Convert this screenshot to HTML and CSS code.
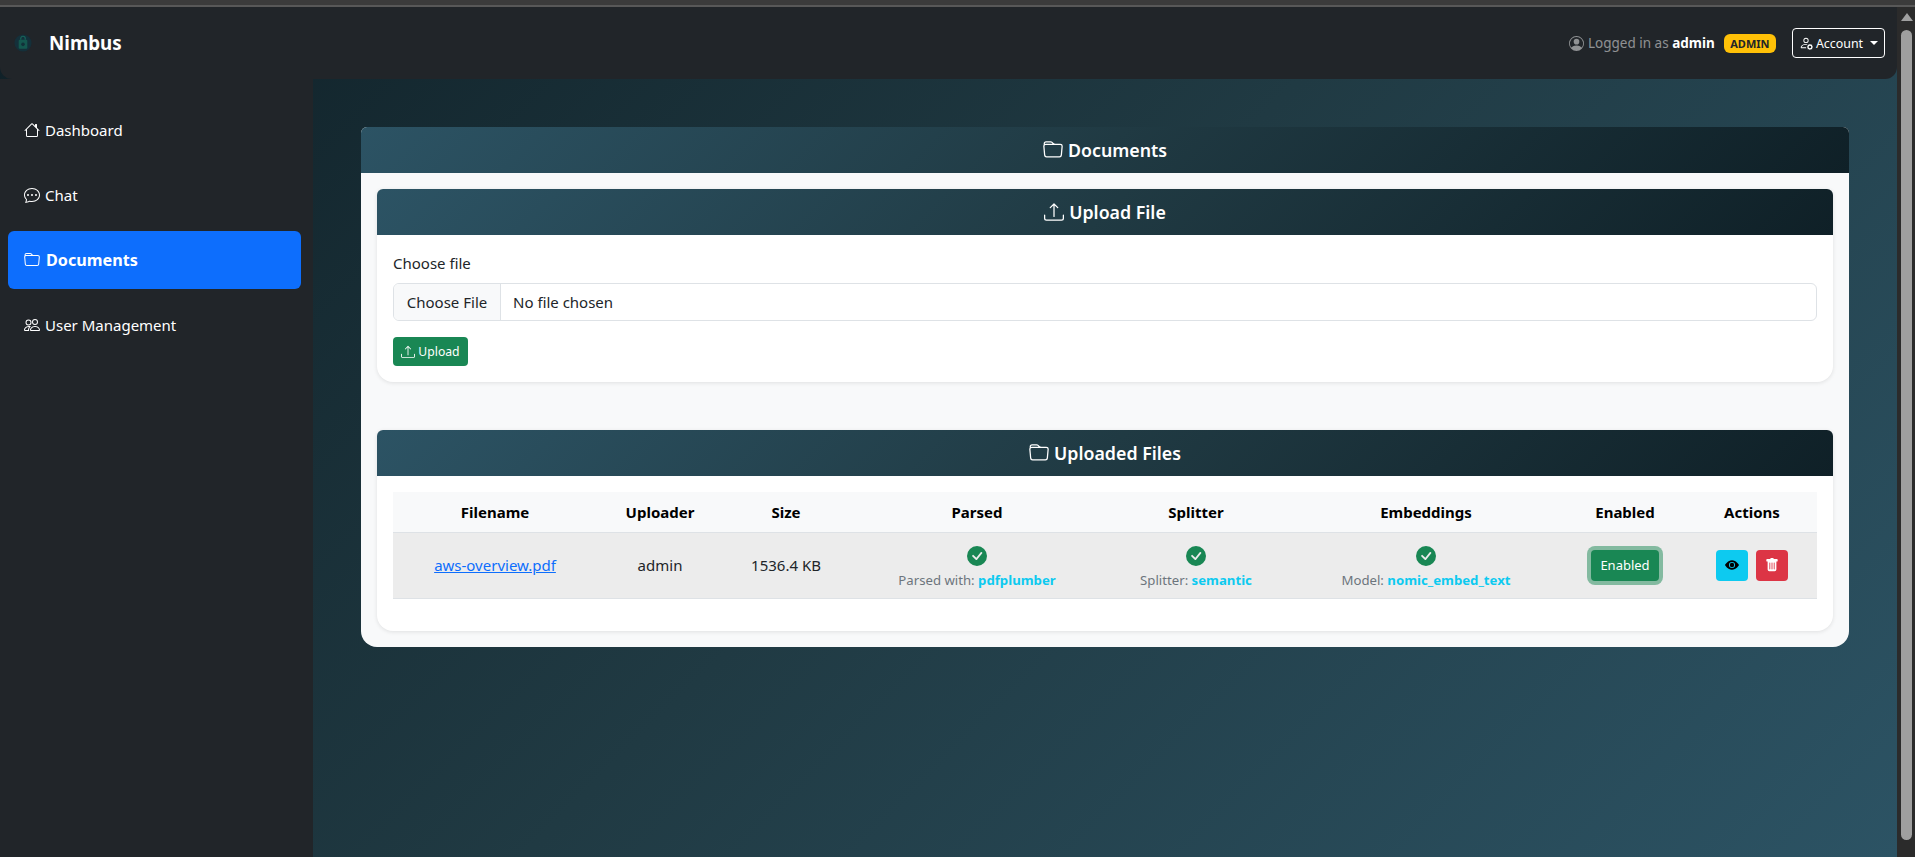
FILE: index.html
```html
<!DOCTYPE html>
<html lang="en">
<head>
<meta charset="utf-8">
<title>Nimbus - Documents</title>
<link rel="stylesheet" href="styles.css">
</head>
<body>
<svg class="sprite" aria-hidden="true">
  <symbol id="i-house" viewBox="0 0 16 16"><path d="M8.707 1.5a1 1 0 0 0-1.414 0L.646 8.146a.5.5 0 0 0 .708.708L2 8.207V13.5A1.5 1.5 0 0 0 3.5 15h9a1.5 1.5 0 0 0 1.5-1.5V8.207l.646.647a.5.5 0 0 0 .708-.708L13 5.793V2.5a.5.5 0 0 0-.5-.5h-1a.5.5 0 0 0-.5.5v1.293zM13 7.207V13.5a.5.5 0 0 1-.5.5h-9a.5.5 0 0 1-.5-.5V7.207l5-5z"/></symbol>
  <symbol id="i-chat" viewBox="0 0 16 16"><path d="M5 8a1 1 0 1 1-2 0 1 1 0 0 1 2 0m4 0a1 1 0 1 1-2 0 1 1 0 0 1 2 0m3 1a1 1 0 1 0 0-2 1 1 0 0 0 0 2"/><path d="m2.165 15.803.02-.004c1.83-.363 2.948-.842 3.468-1.105A9 9 0 0 0 8 15c4.418 0 8-3.134 8-7s-3.582-7-8-7-8 3.134-8 7c0 1.76.743 3.37 1.97 4.6a10.4 10.4 0 0 1-.524 2.318l-.003.011a11 11 0 0 1-.244.637c-.079.186.074.394.273.362a22 22 0 0 0 .693-.125m.8-3.108a1 1 0 0 0-.287-.801C1.618 10.83 1 9.468 1 8c0-3.192 3.004-6 7-6s7 2.808 7 6-3.004 6-7 6a8 8 0 0 1-2.088-.272 1 1 0 0 0-.711.074c-.387.196-1.24.57-2.634.893a11 11 0 0 0 .398-2"/></symbol>
  <symbol id="i-folder" viewBox="0 0 16 16"><path d="M.54 3.87.5 3a2 2 0 0 1 2-2h3.672a2 2 0 0 1 1.414.586l.828.828A2 2 0 0 0 9.828 3h3.982a2 2 0 0 1 1.992 2.181l-.637 7A2 2 0 0 1 13.174 14H2.826a2 2 0 0 1-1.991-1.819l-.637-7a2 2 0 0 1 .342-1.31zM2.19 4a1 1 0 0 0-.996 1.09l.637 7a1 1 0 0 0 .995.91h10.348a1 1 0 0 0 .995-.91l.637-7A1 1 0 0 0 13.81 4zm4.69-1.707A1 1 0 0 0 6.172 2H2.5a1 1 0 0 0-1 .981l.006.139q.323-.119.684-.12h5.396z"/></symbol>
  <symbol id="i-people" viewBox="0 0 16 16"><path d="M15 14s1 0 1-1-1-4-5-4-5 3-5 4 1 1 1 1zm-7.978-1L7 12.996c.001-.264.167-1.03.76-1.72C8.312 10.629 9.282 10 11 10c1.717 0 2.687.63 3.24 1.276.593.69.758 1.457.76 1.72l-.008.002-.014.002zM11 7a2 2 0 1 0 0-4 2 2 0 0 0 0 4m3-2a3 3 0 1 1-6 0 3 3 0 0 1 6 0M6.936 9.28a6 6 0 0 0-1.23-.247A7 7 0 0 0 5 9c-4 0-5 3-5 4q0 1 1 1h4.216A2.24 2.24 0 0 1 5 13c0-1.01.377-2.042 1.09-2.904.243-.294.526-.569.846-.816M4.92 10A5.5 5.5 0 0 0 4 13H1c0-.26.164-1.03.76-1.724.545-.636 1.492-1.256 3.16-1.275ZM1.5 5.5a3 3 0 1 1 6 0 3 3 0 0 1-6 0m3-2a2 2 0 1 0 0 4 2 2 0 0 0 0-4"/></symbol>
  <symbol id="i-upload" viewBox="0 0 16 16"><path d="M.5 9.9a.5.5 0 0 1 .5.5v2.5a1 1 0 0 0 1 1h12a1 1 0 0 0 1-1v-2.5a.5.5 0 0 1 1 0v2.5a2 2 0 0 1-2 2H2a2 2 0 0 1-2-2v-2.5a.5.5 0 0 1 .5-.5"/><path d="M7.646 1.146a.5.5 0 0 1 .708 0l3 3a.5.5 0 0 1-.708.708L8.5 2.707V11.5a.5.5 0 0 1-1 0V2.707L5.354 4.854a.5.5 0 1 1-.708-.708z"/></symbol>
  <symbol id="i-person-circle" viewBox="0 0 16 16"><path d="M11 6a3 3 0 1 1-6 0 3 3 0 0 1 6 0"/><path fill-rule="evenodd" d="M0 8a8 8 0 1 1 16 0A8 8 0 0 1 0 8m8-7a7 7 0 0 0-5.468 11.37C3.242 11.226 4.805 10 8 10s4.757 1.225 5.468 2.37A7 7 0 0 0 8 1"/></symbol>
  <symbol id="i-person-gear" viewBox="0 0 16 16"><path d="M11 5a3 3 0 1 1-6 0 3 3 0 0 1 6 0M8 7a2 2 0 1 0 0-4 2 2 0 0 0 0 4m.256 7a4.5 4.5 0 0 1-.229-1.004H3c.001-.246.154-.986.832-1.664C4.484 10.68 5.711 10 8 10q.39 0 .74.025c.226-.341.496-.65.804-.918Q8.844 9.002 8 9c-5 0-6 3-6 4s1 1 1 1z"/><path d="M11.886 9.46c.18-.613 1.048-.613 1.229 0l.043.148a.64.64 0 0 0 .921.382l.136-.074c.561-.306 1.175.308.87.869l-.075.136a.64.64 0 0 0 .382.92l.149.045c.612.18.612 1.048 0 1.229l-.15.043a.64.64 0 0 0-.38.921l.074.136c.305.561-.309 1.175-.87.87l-.136-.075a.64.64 0 0 0-.92.382l-.045.149c-.18.612-1.048.612-1.229 0l-.043-.15a.64.64 0 0 0-.921-.38l-.136.074c-.561.305-1.175-.309-.87-.87l.075-.136a.64.64 0 0 0-.382-.92l-.148-.045c-.613-.18-.613-1.048 0-1.229l.148-.043a.64.64 0 0 0 .382-.921l-.074-.136c-.306-.561.308-1.175.869-.87l.136.075a.64.64 0 0 0 .92-.382zM14 12.5a1.5 1.5 0 1 0-3 0 1.5 1.5 0 0 0 3 0"/></symbol>
  <symbol id="i-check" viewBox="0 0 16 16"><path d="M16 8A8 8 0 1 1 0 8a8 8 0 0 1 16 0m-3.97-3.03a.75.75 0 0 0-1.08.022L7.477 9.417 5.384 7.323a.75.75 0 0 0-1.06 1.06L6.97 11.03a.75.75 0 0 0 1.079-.02l3.992-4.99a.75.75 0 0 0-.01-1.05z"/></symbol>
  <symbol id="i-eye" viewBox="0 0 16 16"><path d="M10.5 8a2.5 2.5 0 1 1-5 0 2.5 2.5 0 0 1 5 0"/><path d="M0 8s3-5.5 8-5.5S16 8 16 8s-3 5.5-8 5.5S0 8 0 8m8 3.5a3.5 3.5 0 1 0 0-7 3.5 3.5 0 0 0 0 7"/></symbol>
  <symbol id="i-trash" viewBox="0 0 16 16"><path d="M2.5 1a1 1 0 0 0-1 1v1a1 1 0 0 0 1 1H3v9a2 2 0 0 0 2 2h6a2 2 0 0 0 2-2V4h.5a1 1 0 0 0 1-1V2a1 1 0 0 0-1-1H10a1 1 0 0 0-1-1H7a1 1 0 0 0-1 1zm3 4a.5.5 0 0 1 .5.5v7a.5.5 0 0 1-1 0v-7a.5.5 0 0 1 .5-.5M8 5a.5.5 0 0 1 .5.5v7a.5.5 0 0 1-1 0v-7A.5.5 0 0 1 8 5m3 .5v7a.5.5 0 0 1-1 0v-7a.5.5 0 0 1 1 0"/></symbol>
</svg>

<div class="browser-strip"></div>
<div class="window">
  <div class="app">
    <header class="navbar">
      <a class="brand" href="#">
        <svg class="logo" viewBox="0 0 20 20" aria-hidden="true">
          <circle cx="10" cy="10" r="9.5" fill="#14303a"/>
          <path d="M7.5 6.5V5a2.5 2.5 0 0 1 5 0v1.5" fill="none" stroke="#17655a" stroke-width="1.3"/>
          <rect x="5.2" y="6.5" width="9.6" height="10" rx="1.2" fill="#14584f"/>
          <circle cx="10" cy="11.5" r="2" fill="#123039"/>
        </svg>
        <span>Nimbus</span>
      </a>
      <div class="nav-right">
        <span class="logged">
          <svg class="icon" aria-hidden="true"><use href="#i-person-circle"/></svg>
          <span>Logged in as <strong>admin</strong></span>
        </span>
        <span class="badge">ADMIN</span>
        <button class="account" type="button">
          <svg class="icon" aria-hidden="true"><use href="#i-person-gear"/></svg>
          <span class="account-label">Account</span>
          <span class="caret"></span>
        </button>
      </div>
    </header>
    <div class="body-row">
      <nav class="sidebar">
        <a class="nav-link" href="#"><svg class="icon" aria-hidden="true"><use href="#i-house"/></svg>Dashboard</a>
        <a class="nav-link" href="#"><svg class="icon" aria-hidden="true"><use href="#i-chat"/></svg>Chat</a>
        <a class="nav-link active" href="#"><svg class="icon" aria-hidden="true"><use href="#i-folder"/></svg>Documents</a>
        <a class="nav-link" href="#"><svg class="icon" aria-hidden="true"><use href="#i-people"/></svg>User Management</a>
      </nav>
      <main class="main">
        <section class="card outer">
          <h1 class="card-head"><svg class="icon" aria-hidden="true"><use href="#i-folder"/></svg>Documents</h1>
          <div class="outer-body">
            <section class="card inner upload-card">
              <h2 class="card-head"><svg class="icon" aria-hidden="true"><use href="#i-upload"/></svg>Upload File</h2>
              <form class="card-body">
                <label class="form-label" for="file">Choose file</label>
                <input class="file-input" id="file" type="file">
                <button class="upload-btn" type="button"><svg class="icon" aria-hidden="true"><use href="#i-upload"/></svg>Upload</button>
              </form>
            </section>
            <section class="card inner files-card">
              <h2 class="card-head"><svg class="icon" aria-hidden="true"><use href="#i-folder"/></svg>Uploaded Files</h2>
              <div class="card-body table-body">
                <table class="files">
                  <thead>
                    <tr>
                      <th class="c-file">Filename</th>
                      <th class="c-user">Uploader</th>
                      <th class="c-size">Size</th>
                      <th class="c-parsed">Parsed</th>
                      <th class="c-split">Splitter</th>
                      <th class="c-embed">Embeddings</th>
                      <th class="c-enabled">Enabled</th>
                      <th class="c-actions">Actions</th>
                    </tr>
                  </thead>
                  <tbody>
                    <tr>
                      <td><a class="file-link" href="#">aws-overview.pdf</a></td>
                      <td>admin</td>
                      <td>1536.4 KB</td>
                      <td class="status-cell"><svg class="status" aria-hidden="true"><use href="#i-check"/></svg><div class="meta">Parsed with: <b>pdfplumber</b></div></td>
                      <td class="status-cell"><svg class="status" aria-hidden="true"><use href="#i-check"/></svg><div class="meta">Splitter: <b>semantic</b></div></td>
                      <td class="status-cell"><svg class="status" aria-hidden="true"><use href="#i-check"/></svg><div class="meta">Model: <b>nomic_embed_text</b></div></td>
                      <td><button class="enabled-btn" type="button">Enabled</button></td>
                      <td>
                        <div class="actions">
                          <button class="act view" type="button" aria-label="View"><svg class="icon" aria-hidden="true"><use href="#i-eye"/></svg></button>
                          <button class="act del" type="button" aria-label="Delete"><svg class="icon" aria-hidden="true"><use href="#i-trash"/></svg></button>
                        </div>
                      </td>
                    </tr>
                  </tbody>
                </table>
              </div>
            </section>
          </div>
        </section>
      </main>
    </div>
  </div>
  <div class="scrollbar" aria-hidden="true">
    <div class="arrow"></div>
    <div class="thumb"></div>
  </div>
</div>
</body>
</html>
```

FILE: styles.css
```css
* { box-sizing: border-box; }
html, body { margin: 0; height: 100%; overflow: hidden; }
body {
  display: flex;
  flex-direction: column;
  font-family: "Noto Sans", "Open Sans", sans-serif;
  font-size: 15px;
  line-height: 24px;
  color: #212529;
  background: #2b2b2b;
}
.sprite { display: none; }
.icon { width: 16px; height: 16px; fill: currentColor; flex: none; display: inline-block; }

.browser-strip {
  height: 7px;
  flex: none;
  background: #3b3b3b;
  border-bottom: 2px solid #585858;
}
.window { flex: 1; display: flex; min-height: 0; }
.app {
  flex: 1;
  display: flex;
  flex-direction: column;
  min-width: 0;
  background: linear-gradient(135deg, #0f2027, #203a43 50%, #2c5364);
}

.scrollbar {
  width: 18px;
  flex: none;
  background: #2b2b2b;
  padding: 6px 3px 17px 4px;
  display: flex;
  flex-direction: column;
  align-items: center;
}
.arrow {
  width: 0; height: 0;
  border-left: 6px solid transparent;
  border-right: 6px solid transparent;
  border-bottom: 8px solid #a0a0a0;
  margin-bottom: 9px;
}
.thumb { width: 11px; flex: 1; background: #9f9f9f; border-radius: 6px; }

.navbar {
  height: 72px;
  flex: none;
  display: flex;
  align-items: center;
  justify-content: space-between;
  padding: 0 12px 0 14px;
  background: #212529;
  border-radius: 0 0 12px 12px;
}
.brand {
  display: flex;
  align-items: center;
  gap: 17px;
  color: #fff;
  text-decoration: none;
  font-size: 18.8px;
  font-weight: 700;
}
.logo { width: 18px; height: 18px; }
.nav-right { display: flex; align-items: center; font-size: 13.5px; }
.logged { display: flex; align-items: center; gap: 4px; color: rgba(255, 255, 255, 0.5); }
.logged .icon { width: 15px; height: 15px; }
.logged strong { color: #fff; font-weight: 700; }
.badge {
  margin-left: 9px;
  padding: 0 6.5px;
  height: 19px;
  line-height: 19px;
  background: #ffc107;
  color: #212529;
  border-radius: 6px;
  font-size: 11px;
  font-weight: 700;
}
.account {
  margin-left: 16px;
  height: 30px;
  width: 93px;
  display: flex;
  align-items: center;
  justify-content: center;
  gap: 3px;
  background: transparent;
  border: 1px solid #fff;
  border-radius: 4px;
  color: #fff;
  font: inherit;
  font-size: 12.4px;
  padding: 0;
}
.account-label { padding-top: 1px; }
.account .icon { width: 14px; height: 14px; }
.caret {
  margin-left: 4px;
  border-top: 4px solid #fff;
  border-left: 4px solid transparent;
  border-right: 4px solid transparent;
}

.body-row { flex: 1; display: flex; min-height: 0; }
.sidebar {
  width: 313px;
  flex: none;
  background: #212529;
  padding: 22px 12px 0 8px;
  display: flex;
  flex-direction: column;
  gap: 7px;
}
.nav-link {
  height: 58px;
  display: flex;
  align-items: center;
  gap: 5px;
  padding-left: 16px;
  border-radius: 6px;
  color: #fff;
  text-decoration: none;
}
.nav-link.active { background: #0d6efd; font-weight: 700; font-size: 16.2px; gap: 6px; }

.main { flex: 1; min-width: 0; padding: 48px; }
.card { background: #fff; }
.outer {
  background: #f8f9fa;
  border-radius: 6px 6px 16px 16px;
  height: 520px;
}
.card-head {
  margin: 0;
  height: 46px;
  display: flex;
  align-items: center;
  justify-content: center;
  gap: 5px;
  color: #fff;
  font-size: 17.8px;
  font-weight: 600;
  background: linear-gradient(135deg, #2c5364, #203a43 50%, #0f2027);
  border-radius: 6px 6px 0 0;
}
.card-head .icon { width: 20px; height: 20px; }
.outer-body { padding: 16px; display: flex; flex-direction: column; gap: 48px; }
.inner {
  border-radius: 6px 6px 16px 16px;
  box-shadow: 0 1px 4px rgba(0, 0, 0, 0.1);
}
.card-body { padding: 16px; }

.form-label { display: block; height: 24px; margin-bottom: 8px; color: #212529; font-size: 15px; }
.file-input {
  display: block;
  width: 100%;
  height: 38px;
  padding: 0;
  border: 1px solid #dee2e6;
  border-radius: 6px;
  background: #fff;
  color: #212529;
  font: inherit;
  line-height: 36px;
}
.file-input::file-selector-button {
  height: 36px;
  width: 107px;
  margin: 0 12px 0 0;
  padding: 0;
  border: 0;
  border-right: 1px solid #dee2e6;
  background: #f8f9fa;
  color: #212529;
  font: inherit;
}
.upload-btn {
  margin-top: 16px;
  display: flex;
  align-items: center;
  justify-content: center;
  gap: 3px;
  width: 75px;
  height: 29px;
  padding: 1px 0 0;
  border: 0;
  border-radius: 4px;
  background: #198754;
  color: #fff;
  font: inherit;
  font-size: 12.2px;
}
.upload-btn .icon { width: 14px; height: 14px; }

.table-body { padding-bottom: 32px; }
.files {
  width: 100%;
  table-layout: fixed;
  border-collapse: collapse;
  text-align: center;
}
.files th {
  height: 40px;
  padding: 0;
  background: #f8f9fa;
  color: #000;
  font-weight: 700;
  font-size: 15px;
  border-bottom: 1px solid #dee2e6;
}
.files th.c-actions { padding-left: 2px; }
.files td {
  height: 66px;
  padding: 0;
  background: #ececec;
  border-bottom: 1px solid #dee2e6;
  vertical-align: middle;
}
.files td.status-cell { vertical-align: top; padding-top: 13px; }
.c-file { width: 204px; }
.c-user { width: 126px; }
.c-size { width: 126px; }
.c-parsed { width: 256px; }
.c-split { width: 182px; }
.c-embed { width: 278px; }
.c-enabled { width: 120px; }
.file-link { color: #0d6efd; }
.status { width: 20px; height: 20px; fill: #198754; display: block; margin: 0 auto 4px; }
.meta { font-size: 13.2px; line-height: 20px; color: #6c757d; }
.meta b { color: #0dcaf0; font-weight: 700; }
.enabled-btn {
  width: 68px;
  height: 31px;
  padding: 0;
  border: 0;
  border-radius: 4px;
  background: #198754;
  color: #fff;
  font: inherit;
  font-size: 13px;
  box-shadow: 0 0 0 4px rgba(25, 135, 84, 0.5);
}
.actions { display: flex; justify-content: center; gap: 8px; padding-left: 2px; }
.act {
  width: 32px;
  height: 31px;
  padding: 0;
  border: 0;
  border-radius: 4px;
  display: flex;
  align-items: center;
  justify-content: center;
}
.act .icon { width: 14px; height: 14px; }
.view { background: #0dcaf0; color: #000; }
.del { background: #dc3545; color: #fff; }
```
